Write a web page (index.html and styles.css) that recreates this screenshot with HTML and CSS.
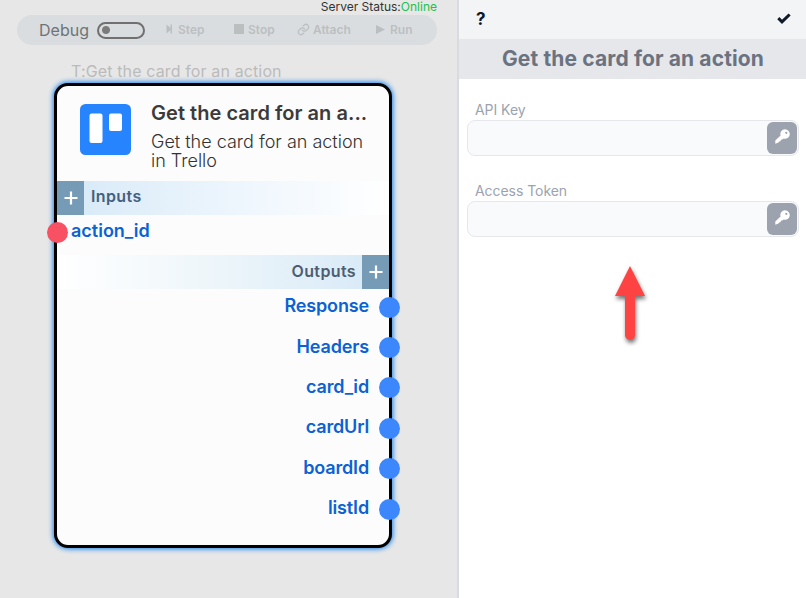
FILE: index.html
```
<!DOCTYPE html>
<html lang="en">
<head>
<meta charset="utf-8">
<title>Flow designer</title>
<link rel="stylesheet" href="styles.css">
</head>
<body>
<div class="app">
  <main class="canvas">
    <div class="status"><span>Server Status:</span><span class="online">Online</span></div>
    <div class="toolbar">
      <span class="debug">Debug</span>
      <span class="toggle"></span>
      <span class="tool step"><svg width="8" height="10" viewBox="0 0 8 10"><path d="M.5 .5L4.500 4V.5H6v9H4.500V6L.5 9.500z"/></svg>Step</span>
      <span class="tool stop"><svg width="10" height="10" viewBox="0 0 10 10"><path d="M0 0h10v10H0z"/></svg>Stop</span>
      <span class="tool attach"><svg width="13" height="13" viewBox="0 0 24 24"><g class="link"><path d="M10 13a5 5 0 0 0 7.500.5l3-3a5 5 0 0 0-7-7l-2 1.700"/><path d="M14 11a5 5 0 0 0-7.500-.5l-3 3a5 5 0 0 0 7 7l2-1.700"/></g></svg>Attach</span>
      <span class="tool run"><svg width="9" height="9" viewBox="0 0 9 9"><path d="M0 0l9 4.500L0 9z"/></svg>Run</span>
    </div>
    <div class="node-tag">T:Get the card for an action</div>
    <section class="node">
      <header class="node-head">
        <svg class="logo" width="51" height="51" viewBox="0 0 51 51"><rect width="51" height="51" rx="5.500" fill="#2684ff"/><rect x="9.500" y="9.500" width="13" height="29.500" rx="2" fill="#fff"/><rect x="29" y="9.500" width="13" height="17.500" rx="2" fill="#fff"/></svg>
        <div class="node-text">
          <h2>Get the card for an a...</h2>
          <p>Get the card for an action<br>in Trello</p>
        </div>
      </header>
      <div class="band inputs"><span class="add"><svg width="14" height="14" viewBox="0 0 14 14"><path d="M7 .5v13M.5 7h13"/></svg></span><span class="band-label">Inputs</span></div>
      <div class="port in"><span class="dot"></span><span>action_id</span></div>
      <div class="band outputs"><span class="band-label">Outputs</span><span class="add"><svg width="14" height="14" viewBox="0 0 14 14"><path d="M7 .5v13M.5 7h13"/></svg></span></div>
      <div class="ports">
        <div class="port out"><span>Response</span><span class="dot"></span></div>
        <div class="port out"><span>Headers</span><span class="dot"></span></div>
        <div class="port out"><span>card_id</span><span class="dot"></span></div>
        <div class="port out"><span>cardUrl</span><span class="dot"></span></div>
        <div class="port out"><span>boardId</span><span class="dot"></span></div>
        <div class="port out"><span>listId</span><span class="dot"></span></div>
      </div>
    </section>
  </main>
  <aside class="panel">
    <div class="panel-bar"><span class="help">?</span><svg width="14" height="11" viewBox="0 0 14 11"><path d="M1.300 5.200L5 8.800L12.600 1.500" fill="none" stroke="#111827" stroke-width="3"/></svg></div>
    <h1>Get the card for an action</h1>
    <div class="form">
      <label class="field"><span>API Key</span><span class="box"><span class="key"><svg width="15" height="15" viewBox="0 0 15 15"><path fill-rule="evenodd" d="M10 0.300a4.700 4.700 0 1 1-1.300 9.200L7.300 10.600 5.800 10.800 5.600 12.200 4 12.400 3.500 13.600 0.300 14.700V11.400L5.600 6.500A4.700 4.700 0 0 1 10 .3zM11.300 2.700a1.100 1.100 0 1 0 .01 0z"/></svg></span></span></label>
      <label class="field"><span>Access Token</span><span class="box"><span class="key"><svg width="15" height="15" viewBox="0 0 15 15"><path fill-rule="evenodd" d="M10 0.300a4.700 4.700 0 1 1-1.300 9.200L7.300 10.600 5.800 10.800 5.600 12.200 4 12.400 3.500 13.600 0.300 14.700V11.400L5.600 6.500A4.700 4.700 0 0 1 10 .3zM11.300 2.700a1.100 1.100 0 1 0 .01 0z"/></svg></span></span></label>
    </div>
    <svg class="arrow" width="30" height="74" viewBox="0 0 30 74"><path d="M15 0L30 30H20V69a5 5 0 0 1-10 0V30H0z" fill="#ff4343"/></svg>
  </aside>
</div>
</body>
</html>
```

FILE: styles.css
```
* { box-sizing: border-box; }
body { margin: 0; font-family: Inter, "Liberation Sans", sans-serif; }
h1, h2, p { margin: 0; }
svg { display: block; flex: none; }
.app { display: flex; width: 806px; height: 598px; overflow: hidden; }
.canvas { width: 459px; flex: none; background: #e7e7e7; border-right: 2px solid #d8dce1; }
.status { height: 15px; padding-right: 20px; text-align: right; font-size: 12px; line-height: 14px; color: #333; white-space: nowrap; }
.online { color: #22c04c; }
.toolbar { display: flex; align-items: center; width: 420px; height: 30px; margin-left: 17px; padding-left: 22px; border-radius: 15px; background: #d9dde0; color: #bcbfc0; font-size: 12px; font-weight: 600; }
.debug { width: 58px; padding-bottom: 1px; font-size: 16px; font-weight: 400; color: #707376; }
.toggle { width: 48px; height: 17px; border: 2px solid #716f6f; border-radius: 9px; background: radial-gradient(circle at 7px 6px, #7b7b7b 3.500px, transparent 4.500px); }
.tool { display: flex; align-items: center; gap: 4px; padding-bottom: 2px; white-space: nowrap; }
.tool svg { fill: currentColor; }
.tool .link { fill: none; stroke: currentColor; stroke-width: 2.300; stroke-linecap: round; }
.step { width: 68px; margin-left: 21px; }
.stop { width: 63px; }
.attach { width: 79px; gap: 3px; }
.run { gap: 5px; }
.node-tag { height: 38px; padding: 17px 0 0 71px; font-size: 16px; letter-spacing: .13px; line-height: 19px; color: #bbb; white-space: nowrap; }
.node { width: 338px; height: 465px; margin-left: 54px; border: 3px solid #000; border-radius: 14px; background: #fcfcfc; box-shadow: 0 0 5px 1px #1682ec; }
.node-head { display: flex; height: 95px; padding: 18px 0 0 23px; }
.node-text { margin-left: 20px; white-space: nowrap; }
.node-text h2 { margin-top: -3px; font-size: 20px; font-weight: 600; line-height: 24px; letter-spacing: .04px; color: #3b3b3b; }
.node-text p { margin-top: 7px; font-size: 18px; font-weight: 300; line-height: 19px; color: #333; }
.band { display: flex; height: 34px; align-items: center; color: #475f7c; font-size: 16px; font-weight: 600; letter-spacing: .38px; }
.inputs { background: linear-gradient(90deg, #d6e9f7, #eef6fd 55%, #fff); }
.outputs { justify-content: flex-end; background: linear-gradient(270deg, #d6e9f7, #eef6fa 55%, #fff); }
.band-label { margin: 0 7px; line-height: 20px; padding-bottom: 3px; }
.outputs .band-label { color: #4d5d73; margin-right: 6px; }
.inputs .band-label { padding-bottom: 4px; }
.add { display: flex; width: 27px; height: 34px; align-items: center; justify-content: center; background: #769bb7; }
.add svg { fill: none; stroke: #fff; stroke-width: 2.200; }
.port { display: flex; align-items: center; color: #0b62d5; font-size: 18px; font-weight: 600; line-height: 20px; }
.port span:not(.dot) { padding-bottom: 2px; letter-spacing: -.15px; }
.dot { width: 21px; height: 21px; flex: none; border-radius: 50%; background: #3b87fb; }
.in { height: 40px; gap: 3px; margin-left: -10px; padding-bottom: 5px; }
.port.in span:not(.dot) { padding-bottom: 3px; letter-spacing: 0; }
.in .dot { background: #f75163; }
.ports { margin-top: -2px; }
.out { height: 40.400px; justify-content: flex-end; gap: 10px; margin-right: -11px; }
.panel { width: 347px; background: #fff; }
.panel-bar { display: flex; height: 39px; align-items: center; justify-content: space-between; padding: 0 15px 2px 17px; background: #f3f4f6; }
.help { color: #111827; font-size: 17px; font-weight: 700; }
.panel h1 { height: 40px; color: #6b7280; background: #e5e7eb; text-align: center; font-size: 21px; font-weight: 700; line-height: 40px; letter-spacing: .13px; padding-left: 1px; }
.form { display: flex; flex-direction: column; gap: 25px; padding: 21px 7px 0 8px; }
.field { display: block; color: #9ca3af; font-size: 14px; line-height: 20px; }
.field > span:first-child { display: block; padding-left: 8px; letter-spacing: -.05px; }
.box { display: flex; height: 36px; padding: 1px; justify-content: flex-end; border: 1px solid #e5e7eb; border-radius: 8px; background: #f9fafb; }
.key { display: flex; width: 30px; height: 32px; border-radius: 6px; background: #9ca3af; align-items: center; justify-content: center; }
.key svg { margin-top: -3px; fill: #fff; }
.arrow { margin: 29px 0 0 156px; overflow: visible; filter: drop-shadow(1px 3px 2px rgba(0,0,0,.55)); }
```
